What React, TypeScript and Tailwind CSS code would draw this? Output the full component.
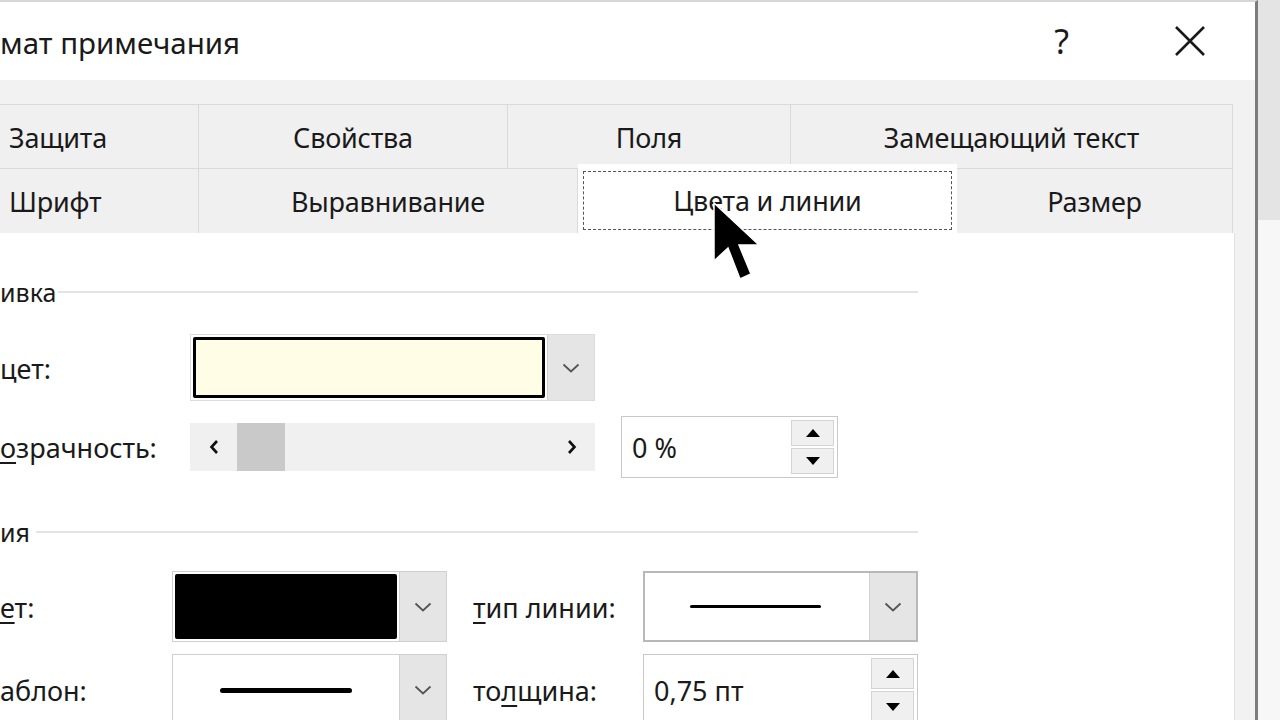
const font = "font-['Segoe_UI','Noto_Sans','Open_Sans',sans-serif]";

function Chevron() {
  return (
    <svg width="18" height="10" viewBox="0 0 18 10" fill="none">
      <path d="M1.5 1.5 L9 8.5 L16.5 1.5" stroke="#555" strokeWidth="1.8" />
    </svg>
  );
}

function SpinButtons() {
  return (
    <div className="flex flex-col w-[46px] h-full py-[3px] pr-[3px] gap-[2px]">
      <div className="flex-1 flex items-center justify-center bg-[#f0f0f0] border border-[#d4d4d4]">
        <svg width="14" height="8" viewBox="0 0 14 8">
          <path d="M7 0 L14 8 L0 8 Z" fill="#000" />
        </svg>
      </div>
      <div className="flex-1 flex items-center justify-center bg-[#f0f0f0] border border-[#d4d4d4]">
        <svg width="14" height="8" viewBox="0 0 14 8">
          <path d="M0 0 L14 0 L7 8 Z" fill="#000" />
        </svg>
      </div>
    </div>
  );
}

function DropButton() {
  return (
    <div className="w-[47px] h-full flex items-center justify-center bg-[#e5e5e5] border-l border-[#d0d0d0]">
      <Chevron />
    </div>
  );
}

function Tab({ label, w, first }: { label: string; w: string; first?: boolean }) {
  return (
    <div
      className={`${w} h-full flex items-center pt-[3px] ${first ? 'justify-start pl-[9px]' : 'justify-center'} border-r border-t border-[#dadada] bg-[#f0f0f0] text-[27px] tracking-[-0.2px] text-[#1a1a1a]`}
    >
      {label}
    </div>
  );
}

function SectionHead({ label, lineFrom }: { label: string; lineFrom: string }) {
  return (
    <div className="flex items-center h-[26px] w-[918px]">
      <span className="text-[25px] leading-none text-[#1a1a1a]">{label}</span>
      <div className={`flex-1 h-[2px] bg-[#e3e3e3] ${lineFrom}`} />
    </div>
  );
}

export default function App() {
  return (
    <div className={`w-[1280px] h-[720px] overflow-hidden flex bg-white ${font} relative`}>
      {/* dialog */}
      <div className="w-[1258px] h-full flex flex-col bg-white border-r-[3px] border-[#7c7c7c] border-t-2 border-t-[#d6d6d6]">
        {/* title bar */}
        <div className="h-[78px] flex items-center shrink-0">
          <span className="text-[29.5px] text-[#1a1a1a] mt-[4px]">мат примечания</span>
          <div className="ml-auto flex items-center mr-[50px] gap-[106px]">
            <span className="text-[34px] text-[#1a1a1a] leading-none">?</span>
            <svg width="30" height="30" viewBox="0 0 30 30">
              <path d="M1 1 L29 29 M29 1 L1 29" stroke="#1a1a1a" strokeWidth="2.6" />
            </svg>
          </div>
        </div>

        {/* body */}
        <div className="flex-1 bg-[#f2f2f2] pt-[24px] flex flex-col">
          <div className="w-[1233px] h-[64px] flex">
            <Tab label="Защита" w="w-[199px]" first />
            <Tab label="Свойства" w="w-[309px]" />
            <Tab label="Поля" w="w-[283px]" />
            <Tab label="Замещающий текст" w="w-[442px]" />
          </div>
          <div className="w-[1233px] h-[65px] flex">
            <Tab label="Шрифт" w="w-[199px]" first />
            <Tab label="Выравнивание" w="w-[379px]" />
            <div className="w-[379px] h-[70px] -mt-[4px] bg-white flex items-start justify-center pt-[7px] px-[5px] relative z-10">
              <div className="w-full h-[59px] border-[1.5px] border-dashed border-[#555] flex items-center justify-center pt-[2px] text-[27px] tracking-[-0.2px] text-[#1a1a1a]">
                Цвета и линии
              </div>
            </div>
            <Tab label="Размер" w="w-[276px]" />
          </div>

          {/* panel */}
          <div className="w-[1235px] flex-1 bg-white border-r border-[#e2e2e2] pt-[46px]">
            <SectionHead label="ивка" lineFrom="ml-[2px]" />

            <div className="flex items-center mt-[29px] h-[67px]">
              <span className="w-[190px] text-[27px] text-[#1a1a1a] pt-[3px]">цет:</span>
              <div className="w-[405px] h-full flex border border-[#dcdcdc]">
                <div className="flex-1 p-[2px]">
                  <div className="w-full h-full bg-[#fffde6] border-[3px] border-black rounded-[2px]" />
                </div>
                <DropButton />
              </div>
            </div>

            <div className="flex items-center mt-[15px] h-[62px]">
              <span className="w-[190px] text-[27px] text-[#1a1a1a] pt-[3px]">
                <span className="underline underline-offset-[4px]">о</span>зрачность:
              </span>
              <div className="w-[405px] h-[48px] bg-[#f0f0f0] flex items-center">
                <div className="w-[47px] flex justify-center">
                  <svg width="10" height="16" viewBox="0 0 10 16">
                    <path d="M8 2 L2.5 8 L8 14" stroke="#111" strokeWidth="2.6" fill="none" />
                  </svg>
                </div>
                <div className="w-[48px] h-full bg-[#c9c9c9]" />
                <div className="flex-1" />
                <div className="w-[47px] flex justify-center">
                  <svg width="10" height="16" viewBox="0 0 10 16">
                    <path d="M2 2 L7.5 8 L2 14" stroke="#111" strokeWidth="2.6" fill="none" />
                  </svg>
                </div>
              </div>
              <div className="ml-[26px] w-[217px] h-full flex border border-[#c8c8c8]">
                <span className="flex-1 flex items-center pl-[10px] pt-[2px] text-[27px] text-[#1a1a1a]">0 %</span>
                <SpinButtons />
              </div>
            </div>

            <div className="mt-[41px]">
              <SectionHead label="ия" lineFrom="ml-[6px]" />
            </div>

            <div className="flex items-center mt-[26px] h-[71px]">
              <span className="w-[172px] text-[27px] text-[#1a1a1a] pt-[3px]">
                <span className="underline underline-offset-[4px]">е</span>т:
              </span>
              <div className="w-[275px] h-full flex border border-[#d0d0d0]">
                <div className="flex-1 p-[2px]">
                  <div className="w-full h-full bg-black rounded-[2px]" />
                </div>
                <DropButton />
              </div>
              <span className="w-[196px] pl-[26px] text-[27px] text-[#1a1a1a] pt-[3px]">
                <span className="underline underline-offset-[4px]">т</span>ип линии:
              </span>
              <div className="w-[275px] h-full flex border-2 border-[#b8b8b8]">
                <div className="flex-1 flex items-center justify-center pr-[4px]">
                  <div className="w-[131px] h-[3px] bg-black rounded-full" />
                </div>
                <DropButton />
              </div>
            </div>

            <div className="flex items-center mt-[12px] h-[72px]">
              <span className="w-[172px] text-[27px] text-[#1a1a1a] pt-[3px]">аблон:</span>
              <div className="w-[275px] h-full flex border border-[#d0d0d0]">
                <div className="flex-1 flex items-center justify-center">
                  <div className="w-[132px] h-[5px] bg-black rounded-full" />
                </div>
                <DropButton />
              </div>
              <span className="w-[196px] pl-[26px] text-[27px] text-[#1a1a1a] pt-[3px]">
                то<span className="underline underline-offset-[4px]">л</span>щина:
              </span>
              <div className="w-[275px] h-full flex border border-[#c8c8c8]">
                <span className="flex-1 flex items-center pl-[10px] pt-[2px] text-[27px] text-[#1a1a1a]">0,75 пт</span>
                <SpinButtons />
              </div>
            </div>
          </div>
        </div>
      </div>

      {/* background window edge */}
      <div className="flex-1 flex flex-col">
        <div className="h-[220px] bg-[#e4e4e4]" />
        <div className="flex-1 bg-[#f7f7f7]" />
      </div>

      {/* mouse pointer */}
      <svg className="absolute left-[712px] top-[201px] z-20" width="52" height="82" viewBox="0 0 52 82">
        <path d="M2 2 L2 60 L16 47 L28 78 L39 73 L27 44 L47 44 Z" fill="#000" stroke="#fff" strokeWidth="1.5" />
      </svg>
    </div>
  );
}
